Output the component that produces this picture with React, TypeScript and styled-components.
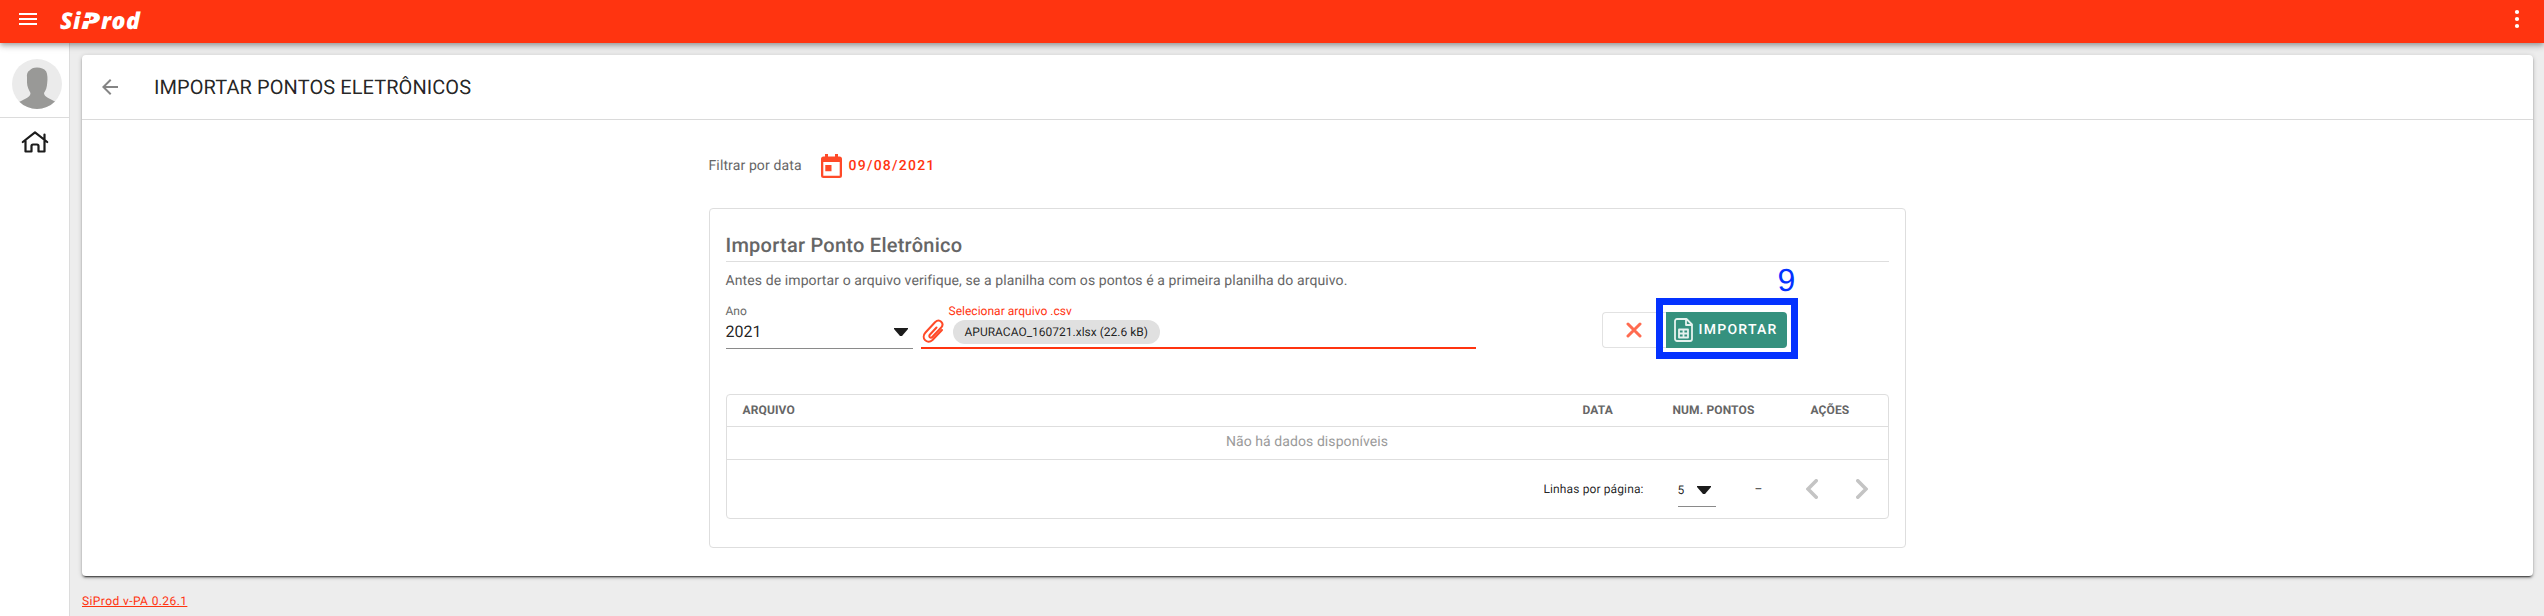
import React from "react";
import styled, { createGlobalStyle } from "styled-components";

const Global = createGlobalStyle`
  * { box-sizing: border-box; }
  body { margin: 0; background: #ededed; font-family: Roboto, "Liberation Sans", sans-serif; color: rgba(0,0,0,.87); text-rendering: geometricPrecision; -webkit-font-smoothing: antialiased; }
  button { text-rendering: inherit; }
`;

const Page = styled.div`display: flex; flex-direction: column; height: 616px; overflow: hidden;`;

const TopBar = styled.header`
  position: relative; z-index: 2; height: 43px; flex: none; display: flex; align-items: center;
  padding: 0 24px 5px 19px; background: #ff3410; color: #fff;
  box-shadow: 0 2px 4px -1px rgba(0,0,0,.2), 0 4px 5px rgba(0,0,0,.14), 0 1px 10px rgba(0,0,0,.12);
`;
const Logo = styled.div`
  display: flex; align-items: center; margin-left: 23px; flex: 1; height: 38px; padding-top: 2px;
  font: italic 800 23px/34px "Open Sans", sans-serif; color: #fff; letter-spacing: .5px;
`;
const LogoP = styled.span`
  position: relative; font-size: 23px; transform: scaleX(1.35); transform-origin: 0 50%; margin-right: 5px;
  &::after { content: ""; position: absolute; left: -1px; top: 15px; width: 7px; height: 3px; background: #ff3410; }
`;

const Body = styled.div`display: flex; flex: 1;`;
const SideBar = styled.nav`
  width: 70px; flex: none; background: #fff; border-right: 1px solid #dcdcdc;
  display: flex; flex-direction: column;
`;
const AvatarSlot = styled.div`height: 75px; padding: 16px 0 0 12px; border-bottom: 1px solid #dcdcdc;`;
const HomeSlot = styled.div`padding: 12px 0 0 21px;`;
const Main = styled.main`flex: 1; display: flex; flex-direction: column; align-items: flex-start; padding: 12px 11px 0 12px;`;
const Card = styled.section`
  width: 100%; height: 521px; background: #fff; border-radius: 4px; display: flex; flex-direction: column; align-items: center;
  box-shadow: 0 3px 1px -2px rgba(0,0,0,.5), 0 2px 2px rgba(0,0,0,.28), 0 1px 5px rgba(0,0,0,.2);
`;
const CardHead = styled.div`
  width: 100%; height: 65px; flex: none; border-bottom: 1px solid #dadada; display: flex; align-items: center; padding-left: 20px;
`;
const PageTitle = styled.h1`margin: 0 0 0 36px; font-size: 20px; font-weight: 400; letter-spacing: .08px; line-height: 32px;`;
const Content = styled.div`width: 1197px; margin-left: -1px;`;
const DateRow = styled.div`display: flex; align-items: center; height: 24px; margin-top: 34px; color: #ff3410;`;
const DateLabel = styled.span`width: 112px; font-size: 14px; letter-spacing: .12px; color: #666; margin-top: -1px;`;
const DateValue = styled.span`font-size: 14px; font-weight: 500; letter-spacing: 1.25px; margin-left: 7px;`;

const Panel = styled.div`margin-top: 30px; height: 340px; border: 1px solid #dedede; border-radius: 4px; padding: 20px 16px 0;`;
const PanelTitle = styled.h2`
  margin: 0; height: 33px; border-bottom: 1px solid #dedede; color: #666;
  font-size: 20px; line-height: 33px; font-weight: 500; letter-spacing: .25px;
`;
const Hint = styled.p`margin: 9px 0 0; color: #666; font-size: 14px; line-height: 20px; letter-spacing: .1px;`;
const FormRow = styled.div`display: flex; height: 46px; margin-top: 12px;`;
const YearField = styled.div`width: 187px; border-bottom: 1px solid #8a8a8a; display: flex; flex-direction: column;`;
const FieldLabel = styled.span<{ $active?: boolean }>`
  font-size: 12px; line-height: 16px; letter-spacing: .02px; color: ${p => (p.$active ? "#ff3410" : "#6a6a6a")};
`;
const YearValue = styled.span`
  display: flex; justify-content: space-between; align-items: center; padding: 1px 5px 0 0;
  font-size: 16px; line-height: 24px; letter-spacing: 0;
`;
const FileField = styled.div`
  width: 555px; margin-left: 8px; border-bottom: 2px solid #ff3410; display: flex; padding-left: 1px; color: #ff3410;
`;
const ClipSlot = styled.div`width: 27px; padding-top: 16px;`;
const FileBody = styled.div`display: flex; flex-direction: column; align-items: flex-start;`;
const Chip = styled.span`
  margin: 1px 0 0 4px; height: 24px; border-radius: 12px; background: #e0e0e0; padding: 0 12px;
  color: rgba(0,0,0,.87); font-size: 12px; line-height: 24px; letter-spacing: 0;
`;
const Actions = styled.div`position: relative; display: flex; margin: 9px 0 0 126px; height: 36px;`;
const CancelButton = styled.button`
  width: 64px; border: 1px solid #e2e2e2; border-right: 0; border-radius: 4px 0 0 4px; background: #fff; padding: 0;
  display: flex; align-items: center; justify-content: center;
`;
const ImportButton = styled.button`
  width: 121px; border: 0; border-radius: 0 4px 4px 0; background: #35917e; color: #fff; padding: 0 0 0 8px;
  display: flex; align-items: center; gap: 6px; font: 500 14px Roboto, sans-serif; letter-spacing: 1.25px;
`;
const Marker = styled.div`
  position: absolute; left: 54px; top: -14px; width: 142px; height: 61px; border: 7px solid #0432ff;
`;
const MarkerNumber = styled.span`
  position: absolute; left: 176px; top: -50px; color: #0432ff; font: 32px/36px "Liberation Sans", sans-serif;
`;

const Table = styled.div`
  margin-top: 45px; height: 125px; border: 1px solid #dedede; border-radius: 4px; font-size: 12px; letter-spacing: .12px;
`;
const HeadRow = styled.div`
  display: grid; grid-template-columns: 840px 90px 138px auto; padding-left: 16px; height: 32px; line-height: 30px;
  border-bottom: 1px solid #dedede; font-weight: 700; color: #666;
`;
const EmptyRow = styled.div`
  height: 33px; border-bottom: 1px solid #dedede; text-align: center; color: #9a9a9a; font-size: 14px; line-height: 31px; letter-spacing: .08px;
`;
const Pager = styled.div`display: flex; height: 58px; align-items: center; padding: 0 20px 0 817px;`;
const PagerLabel = styled.span`width: 134px; white-space: nowrap;`;
const PageSize = styled.span`
  width: 38px; height: 33px; border-bottom: 1px solid #8a8a8a; display: flex; align-items: center; justify-content: space-between; padding-right: 5px;
  margin-top: 2px;
`;
const Range = styled.span`width: 51px; margin-left: 39px;`;
const Arrows = styled.span`display: flex; gap: 38px;`;
const Version = styled.a`margin-top: 16px; color: #ff3410; font-size: 12px; line-height: 18px; letter-spacing: .4px; text-decoration: underline;`;

const Caret = () => (
  <svg width="14" height="8" viewBox="0 0 14 8"><path d="M0 0h14v1L8 8H6L0 1z" fill="#1c1c1c" /></svg>
);
const Chevron = ({ d }: { d: string }) => (
  <svg width="12" height="20" viewBox="0 0 12 20" fill="none" stroke="#c4c4c4" strokeWidth="3.600" strokeLinecap="round"><path d={d} /></svg>
);

export default function App() {
  return (
    <Page>
      <Global />
      <TopBar>
        <svg width="18" height="12" viewBox="0 0 18 12" fill="#fff"><path d="M0 0h18v2H0zM0 5h18v2H0zM0 10h18v2H0z" /></svg>
        <Logo>Si<LogoP>P</LogoP>rod</Logo>
        <svg width="6" height="20" viewBox="0 0 6 20" fill="#fff"><circle cx="3" cy="3" r="2.1" /><circle cx="3" cy="10" r="2.1" /><circle cx="3" cy="17" r="2.1" /></svg>
      </TopBar>
      <Body>
        <SideBar>
          <AvatarSlot>
            <svg width="50" height="50" viewBox="0 0 50 50">
              <clipPath id="round"><circle cx="25" cy="25" r="25" /></clipPath>
              <circle cx="25" cy="25" r="25" fill="#ebebeb" />
              <path clipPath="url(#round)" d="M25 8.500c-4 0-5.500 1-7.500 3-2 1-3 4-2.500 7v5c0 4 2 8 3.500 10.500 0 4-4 5-11.500 9L7 50h37v-7c-7-4-12-5-12-9 2-3 3-6 3.200-10 .6-4 .3-9-1-11.500C32 9.500 29 8.500 25 8.500z" fill="#999997" />
            </svg>
          </AvatarSlot>
          <HomeSlot>
            <svg width="28" height="24" viewBox="0 0 28 24" fill="none" stroke="#1c1c1c" strokeWidth="2.200" strokeLinejoin="round" strokeLinecap="round">
              <path d="M1.800 12L14 2.400 26.200 12M4.500 11v10.500h6v-5.500c0-1 .6-1.500 1.500-1.500h4c.9 0 1.500.5 1.500 1.500v5.500h6V11M23.500 4.500v5" />
            </svg>
          </HomeSlot>
        </SideBar>
        <Main>
          <Card>
            <CardHead>
              <svg width="16" height="16" viewBox="0 0 16 16" fill="#858585"><path d="M16 7H3.830l5.590-5.590L8 0 0 8l8 8 1.410-1.410L3.830 9H16z" /></svg>
              <PageTitle>IMPORTAR PONTOS ELETRÔNICOS</PageTitle>
            </CardHead>
            <Content>
              <DateRow>
                <DateLabel>Filtrar por data</DateLabel>
                <svg width="21" height="24" viewBox="0 0 21 24" fill="#ff4a28" fillRule="evenodd"><path d="M4 0h3v2.500h7V0h3v2.500h1.500A2.500 2.500 0 0 1 21 5v16.500a2.500 2.500 0 0 1-2.500 2.500h-16A2.500 2.500 0 0 1 0 21.500V5a2.500 2.500 0 0 1 2.500-2.500H4zM2.300 8v13.700h16.400V8zM4.300 11h6.200v6.200H4.300z" /></svg>
                <DateValue>09/08/2021</DateValue>
              </DateRow>
              <Panel>
                <PanelTitle>Importar Ponto Eletrônico</PanelTitle>
                <Hint>Antes de importar o arquivo verifique, se a planilha com os pontos é a primeira planilha do arquivo.</Hint>
                <FormRow>
                  <YearField>
                    <FieldLabel>Ano</FieldLabel>
                    <YearValue>2021<Caret /></YearValue>
                  </YearField>
                  <FileField>
                    <ClipSlot>
                      <svg width="22" height="24" viewBox="0 0 22 24" fill="none" stroke="#ff4a28" strokeWidth="2" strokeLinecap="round">
                        <path d="M14.500 8.500L8 15.500c-2 2.200.6 4.300 2.500 2.300l8.500-9c4-4.500-1.500-10-6-5.500L3.500 13.500c-5 5.500 1.500 12.500 7 7.500l9.500-10" />
                      </svg>
                    </ClipSlot>
                    <FileBody>
                      <FieldLabel $active>Selecionar arquivo .csv</FieldLabel>
                      <Chip>APURACAO_160721.xlsx (22.6 kB)</Chip>
                    </FileBody>
                  </FileField>
                  <Actions>
                    <CancelButton>
                      <svg width="16" height="16" viewBox="0 0 16 16" stroke="#ff6b50" strokeWidth="3" strokeLinecap="round"><path d="M2 2l12 12M14 2L2 14" /></svg>
                    </CancelButton>
                    <ImportButton>
                      <svg width="19" height="24" viewBox="0 0 19 24" fill="none" stroke="#e6f2ef" strokeWidth="1.800" strokeLinejoin="round">
                        <path d="M3 1h9.500l5.500 5.500V21a2 2 0 0 1-2 2H3a2 2 0 0 1-2-2V3a2 2 0 0 1 2-2zM12 1v6h6M5 11.500h9v8H5zM9.500 11.500v8M5 15.500h9" />
                      </svg>
                      IMPORTAR
                    </ImportButton>
                    <Marker />
                    <MarkerNumber>9</MarkerNumber>
                  </Actions>
                </FormRow>
                <Table>
                  <HeadRow><span>ARQUIVO</span><span>DATA</span><span>NUM. PONTOS</span><span>AÇÕES</span></HeadRow>
                  <EmptyRow>Não há dados disponíveis</EmptyRow>
                  <Pager>
                    <PagerLabel>Linhas por página:</PagerLabel>
                    <PageSize>5<Caret /></PageSize>
                    <Range>–</Range>
                    <Arrows><Chevron d="M10.200 1.800L2 10l8.200 8.200" /><Chevron d="M1.800 1.800L10 10l-8.200 8.200" /></Arrows>
                  </Pager>
                </Table>
              </Panel>
            </Content>
          </Card>
          <Version>SiProd v-PA 0.26.1</Version>
        </Main>
      </Body>
    </Page>
  );
}
